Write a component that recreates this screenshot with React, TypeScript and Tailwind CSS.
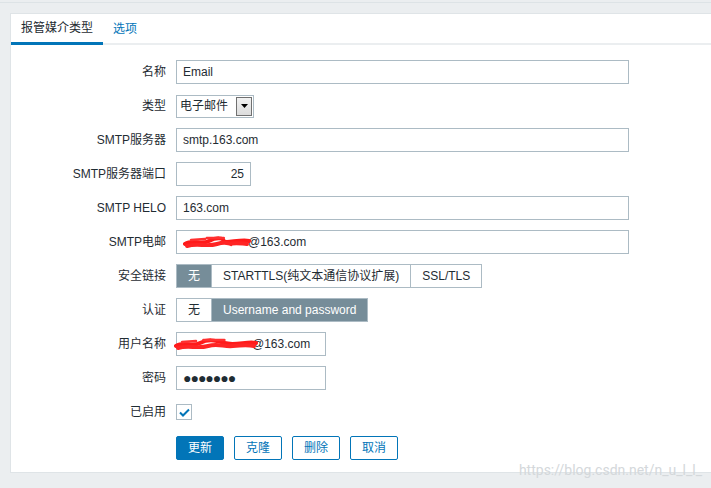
import React from "react";

const font = { fontFamily: '"Liberation Sans", Arial, "Noto Sans CJK SC", sans-serif' };

function Row({ label, children }: { label: string; children: React.ReactNode }) {
  return (
    <div className="flex items-center h-6">
      <div className="w-[165px] pr-[10px] text-right text-[12px] text-[#1f2c33]">{label}</div>
      <div className="flex items-center">{children}</div>
    </div>
  );
}

function Input({ value, w, right }: { value: React.ReactNode; w: string; right?: boolean }) {
  return (
    <div
      className={`${w} h-6 border border-[#acbbc4] bg-white px-[6px] flex items-center text-[12px] text-[#1f2c33] ${
        right ? "justify-end" : ""
      }`}
    >
      {value}
    </div>
  );
}

// red marker scribble covering the hidden part of the address
function Scribble({ w }: { w: number }) {
  return (
    <svg width={w} height="16" viewBox={`0 0 ${w} 16`} className="absolute left-0 top-1/2 -translate-y-1/2">
      <path
        d={`M2 10 C 10 5, 18 11, 26 7 S 40 4, ${w * 0.6} 7 S ${w - 10} 5, ${w - 2} 7`}
        stroke="#ff1a1a"
        strokeWidth="4"
        fill="none"
        strokeLinecap="round"
      />
      <path
        d={`M4 12 C 14 9, 24 13, 34 10 S 50 11, ${w * 0.7} 10 S ${w - 8} 9, ${w - 4} 10`}
        stroke="#ff2424"
        strokeWidth="4"
        fill="none"
        strokeLinecap="round"
      />
      <path
        d={`M8 6 L 22 5 M ${w * 0.35} 4 L ${w * 0.6} 4`}
        stroke="#ff3030"
        strokeWidth="2.5"
        fill="none"
        strokeLinecap="round"
      />
    </svg>
  );
}

function Segmented({ items, active }: { items: string[]; active: number }) {
  return (
    <div className="flex h-6 border border-[#acbbc4] text-[12px]">
      {items.map((it, i) => (
        <div
          key={it}
          className={`flex items-center px-[11px] ${i > 0 ? "border-l border-[#acbbc4]" : ""} ${
            i === active ? "bg-[#768d99] text-white" : "bg-white text-[#1f2c33]"
          }`}
        >
          {it}
        </div>
      ))}
    </div>
  );
}

export default function App() {
  return (
    <div className="min-h-[488px] w-[711px] bg-[#ebeef0] overflow-hidden relative" style={font}>
      <div className="h-[3px] border-b border-[#dde3e6]" />
      <div className="ml-[10px] mt-[10px] h-[460px] bg-white border border-r-0 border-[#dfe4e7]">
        {/* tabs */}
        <div className="flex h-[31px] border-b-2 border-[#ebeef0] text-[12px]">
          <div className="w-[92px] flex items-center justify-center border-b-[3px] border-[#0275b8] -mb-[2px] text-[#1f2c33]">
            报管媒介类型
          </div>
          <div className="ml-[10px] flex items-center text-[#0275b8]">选项</div>
        </div>

        <div className="pt-[15px] flex flex-col gap-[10px]">
          <Row label="名称">
            <Input w="w-[453px]" value="Email" />
          </Row>
          <Row label="类型">
            <div className="w-[78px] h-[23px] border border-[#acbbc4] bg-white flex items-center pl-[3px] pr-[1px] text-[12px] text-[#1f2c33]">
              <span className="flex-1">电子邮件</span>
              <div className="w-[16px] h-[19px] border border-[#707070] bg-gradient-to-b from-[#f2f2f2] to-[#dcdcdc] flex items-center justify-center">
                <svg width="7" height="4" viewBox="0 0 7 4">
                  <path d="M0 0 H7 L3.5 4 Z" fill="#000" />
                </svg>
              </div>
            </div>
          </Row>
          <Row label="SMTP服务器">
            <Input w="w-[453px]" value="smtp.163.com" />
          </Row>
          <Row label="SMTP服务器端口">
            <Input w="w-[75px]" value="25" right />
          </Row>
          <Row label="SMTP HELO">
            <Input w="w-[453px]" value="163.com" />
          </Row>
          <Row label="SMTP电邮">
            <Input
              w="w-[453px]"
              value={
                <span className="flex items-center">
                  <span className="relative w-[65px] h-4 inline-block">
                    <Scribble w={68} />
                  </span>
                  @163.com
                </span>
              }
            />
          </Row>
          <Row label="安全链接">
            <Segmented items={["无", "STARTTLS(纯文本通信协议扩展)", "SSL/TLS"]} active={0} />
          </Row>
          <Row label="认证">
            <Segmented items={["无", "Username and password"]} active={1} />
          </Row>
          <Row label="用户名称">
            <div className="relative">
              <Input
                w="w-[150px]"
                value={
                  <span className="flex items-center">
                    <span className="w-[69px] inline-block" />
                    @163.com
                  </span>
                }
              />
              <div className="absolute -left-[2px] top-1/2 -translate-y-1/2 w-[84px] h-4">
                <Scribble w={84} />
              </div>
            </div>
          </Row>
          <Row label="密码">
            <Input w="w-[150px]" value={<span className="text-[14px] tracking-[-1px] font-bold">●●●●●●●</span>} />
          </Row>
          <Row label="已启用">
            <div className="w-4 h-4 border border-[#acbbc4] bg-white flex items-center justify-center">
              <svg width="11" height="9" viewBox="0 0 11 9">
                <path d="M1 4.5 L4 7.5 L10 1.5" stroke="#0275b8" strokeWidth="2" fill="none" />
              </svg>
            </div>
          </Row>
          <div className="flex pl-[165px] pt-[2px] gap-[10px] text-[12px]">
            <button className="w-12 h-6 rounded-[2px] bg-[#0275b8] border border-[#0275b8] text-white">更新</button>
            <button className="w-12 h-6 rounded-[2px] bg-white border border-[#0275b8] text-[#0275b8]">克隆</button>
            <button className="w-12 h-6 rounded-[2px] bg-white border border-[#0275b8] text-[#0275b8]">删除</button>
            <button className="w-12 h-6 rounded-[2px] bg-white border border-[#0275b8] text-[#0275b8]">取消</button>
          </div>
        </div>
      </div>
      <div className="absolute right-[9px] top-[460px] text-[14px] text-[#d4d8db]" style={{ fontFamily: "Roboto, sans-serif" }}>
        https://blog.csdn.net/n_u_l_l_
      </div>
    </div>
  );
}
